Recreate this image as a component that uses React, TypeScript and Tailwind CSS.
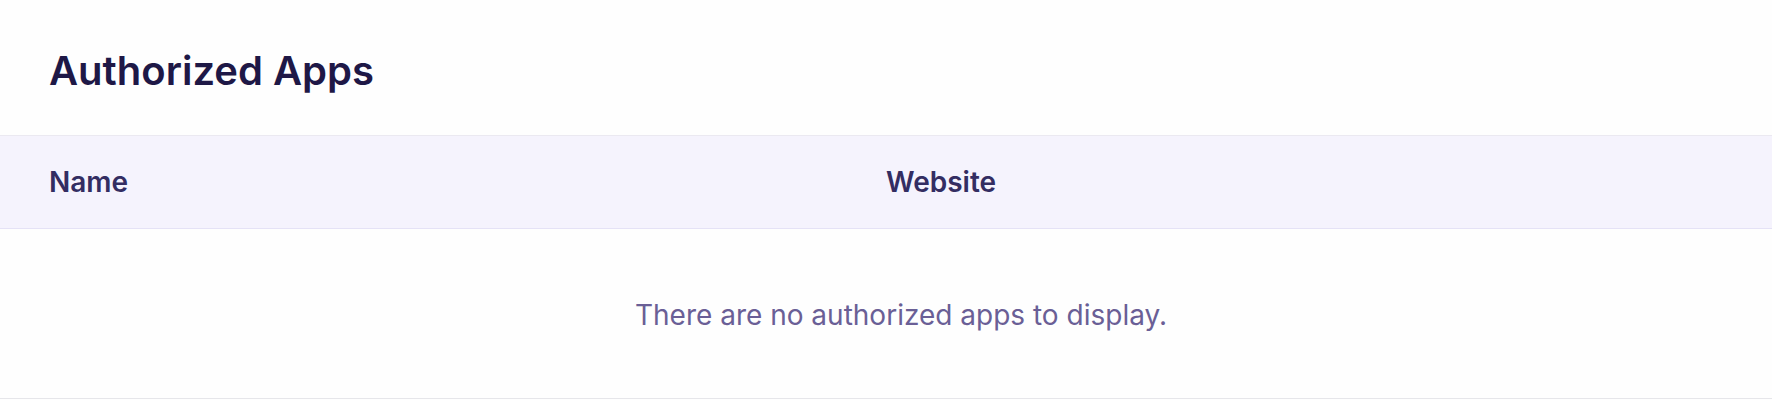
import React from "react";

export default function App() {
  return (
    <div className="w-[1772px] h-[400px] bg-[#fefefe] overflow-hidden" style={{ fontFamily: "Inter, 'Noto Sans', sans-serif" }}>
      <div className="h-[135px] flex items-center px-[49px] pt-[6px]">
        <h1 className="text-[40px] font-semibold text-[#1e1846] leading-none">Authorized Apps</h1>
      </div>
      <div className="h-[94px] bg-[#f5f3fd] border-t border-b border-t-[#ebe9f1] border-b-[#e5e2f6] grid grid-cols-2 items-center px-[49px]">
        <div className="text-[28px] font-semibold text-[#332d62] leading-none">Name</div>
        <div className="text-[28px] font-semibold text-[#332d62] leading-none">Website</div>
      </div>
      <div className="h-[170px] border-b border-[#e6e6ea] flex items-center justify-center pl-[30px] pt-[2px]">
        <p className="text-[28px] text-[#6a5f96] leading-none">There are no authorized apps to display.</p>
      </div>
    </div>
  );
}
